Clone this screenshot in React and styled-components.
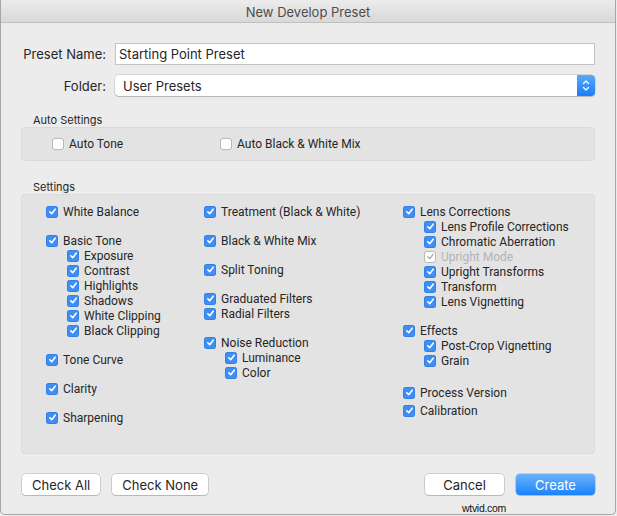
import React from "react";
import styled, { createGlobalStyle } from "styled-components";

const Global = createGlobalStyle`
  html, body { margin: 0; padding: 0; background: #ececec; }
  body { font-family: "Inter", "Roboto", "Liberation Sans", sans-serif; color: #262626; }
  * { box-sizing: border-box; }
`;

const Window = styled.div`
  position: relative;
  width: 616px;
  height: 515px;
  background: #ececec;
  border: 1px solid #a6a6a6;
  border-top: none;
  border-radius: 0 0 5px 5px;
  display: flex;
  flex-direction: column;
  overflow: hidden;
`;

const TitleBar = styled.div`
  height: 23px;
  flex: none;
  background: linear-gradient(#ececec, #d8d8d8);
  border-bottom: 1px solid #bfbfbf;
  display: flex;
  align-items: center;
  justify-content: center;
  font-size: 13px;
  color: #4d4d4d;
  padding-top: 1px;
`;

const Body = styled.div`
  flex: 1;
  display: flex;
  flex-direction: column;
  padding: 20px 20px 0 19px;
`;

const FieldRow = styled.div`
  display: flex;
  align-items: center;
  height: 21px;
  margin-bottom: ${(p) => p.$mb || 0}px;
`;

const FieldLabel = styled.div`
  width: 86px;
  text-align: right;
  font-size: 13px;
  color: #262626;
`;

const TextInput = styled.div`
  margin-left: 9px;
  flex: 1;
  height: 22px;
  background: #fff;
  border: 1px solid #c4c4c4;
  font-size: 13px;
  display: flex;
  align-items: center;
  padding-left: 3px;
  color: #262626;
`;

const Select = styled.div`
  margin-left: 9px;
  flex: 1;
  height: 21px;
  background: #fff;
  border-radius: 4px;
  box-shadow: 0 0 0 0.5px rgba(0,0,0,0.2), 0 1px 1px rgba(0,0,0,0.15);
  font-size: 13px;
  display: flex;
  align-items: center;
  padding-left: 8px;
  color: #262626;
`;

const Stepper = styled.div`
  margin-left: auto;
  width: 18px;
  height: 21px;
  border-radius: 0 4px 4px 0;
  background: linear-gradient(#5aa8fb, #1a7ef9);
  display: flex;
  align-items: center;
  justify-content: center;
`;

const SectionTitle = styled.div`
  font-size: 11px;
  color: #262626;
  margin-left: 13px;
  height: 12px;
  line-height: 12px;
  margin-top: ${(p) => p.$mt || 0}px;
  margin-bottom: 1px;
`;

const Panel = styled.div`
  margin-left: 1px;
  background: #e3e3e3;
  border: 1px solid #dadada;
  border-radius: 4px;
`;

const AutoPanel = styled(Panel)`
  height: 34px;
  display: flex;
  align-items: center;
  padding-left: 30px;
`;

const AutoItem = styled.div`
  width: ${(p) => p.$w || "auto"};
`;

const SettingsPanel = styled(Panel)`
  height: 260px;
  display: grid;
  grid-template-columns: 158px 199px 1fr;
  padding: 9px 0 0 24px;
  align-items: start;
`;

const Column = styled.div`
  display: flex;
  flex-direction: column;
`;

const Group = styled.div`
  display: flex;
  flex-direction: column;
  margin-top: ${(p) => p.$mt ?? 14}px;
`;

const Row = styled.div`
  display: flex;
  align-items: center;
  height: 15px;
  padding-left: ${(p) => (p.$sub ? 21 : 0)}px;
  font-family: "Roboto", "Inter", sans-serif;
  font-size: 12px;
  color: ${(p) => (p.$disabled ? "#b3b3b3" : "#262626")};
  white-space: nowrap;
`;

const Box = styled.span`
  width: 12px;
  height: 12px;
  flex: none;
  margin-right: 5px;
  border-radius: 3px;
  display: inline-flex;
  align-items: center;
  justify-content: center;
  background: ${(p) => (p.$checked && !p.$disabled ? "#3d8ef5" : "#fff")};
  box-shadow: ${(p) =>
    p.$checked && !p.$disabled
      ? "inset 0 0 0 0.5px rgba(0,60,160,0.35)"
      : "inset 0 0 0 1px #b9b9b9"};
`;

const ButtonBar = styled.div`
  margin-top: 20px;
  display: flex;
  align-items: flex-start;
  padding-left: 2px;
  gap: 12px;
`;

const Button = styled.div`
  height: 21px;
  min-width: ${(p) => p.$w}px;
  padding: 0 10px;
  border-radius: 4px;
  display: flex;
  align-items: center;
  justify-content: center;
  font-size: 13px;
  color: ${(p) => (p.$primary ? "#fff" : "#262626")};
  background: ${(p) => (p.$primary ? "linear-gradient(#6cb3fa, #1a82fb)" : "#fff")};
  box-shadow: ${(p) =>
    p.$primary
      ? "0 0 0 0.5px rgba(0,80,200,0.4), 0 1px 1px rgba(0,0,0,0.1)"
      : "0 0 0 0.5px rgba(0,0,0,0.25), 0 1px 1px rgba(0,0,0,0.12)"};
`;

const Spacer = styled.div`
  flex: 1;
`;

const Watermark = styled.div`
  position: absolute;
  right: 109px;
  bottom: 0px;
  font-family: "Liberation Sans", Arial, sans-serif;
  font-size: 10.5px;
  color: #111;
  letter-spacing: -0.3px;
`;

const Check = () => (
  <svg width="9" height="9" viewBox="0 0 9 9">
    <path d="M1.8 4.8 L3.7 6.7 L7.2 2.2" fill="none" stroke="#fff" strokeWidth="1.6" strokeLinecap="round" strokeLinejoin="round" />
  </svg>
);

const GrayCheck = () => (
  <svg width="9" height="9" viewBox="0 0 9 9">
    <path d="M1.8 4.8 L3.7 6.7 L7.2 2.2" fill="none" stroke="#b0b0b0" strokeWidth="1.4" strokeLinecap="round" strokeLinejoin="round" />
  </svg>
);

const Item = ({ label, sub, checked = true, disabled }) => (
  <Row $sub={sub} $disabled={disabled}>
    <Box $checked={checked} $disabled={disabled}>
      {checked && (disabled ? <GrayCheck /> : <Check />)}
    </Box>
    {label}
  </Row>
);

const StepIcon = () => (
  <svg width="8" height="13" viewBox="0 0 8 13">
    <path d="M1.5 4.5 L4 2 L6.5 4.5 M1.5 8.5 L4 11 L6.5 8.5" fill="none" stroke="#fff" strokeWidth="1.3" strokeLinecap="round" strokeLinejoin="round" />
  </svg>
);

export default function App() {
  return (
    <>
      <Global />
      <Window>
        <TitleBar>New Develop Preset</TitleBar>
        <Body>
          <FieldRow $mb={11}>
            <FieldLabel>Preset Name:</FieldLabel>
            <TextInput>Starting Point Preset</TextInput>
          </FieldRow>
          <FieldRow>
            <FieldLabel>Folder:</FieldLabel>
            <Select>
              User Presets
              <Stepper><StepIcon /></Stepper>
            </Select>
          </FieldRow>

          <SectionTitle $mt={18}>Auto Settings</SectionTitle>
          <AutoPanel>
            <AutoItem $w="168px"><Item label="Auto Tone" checked={false} /></AutoItem>
            <AutoItem><Item label="Auto Black &amp; White Mix" checked={false} /></AutoItem>
          </AutoPanel>

          <SectionTitle $mt={20}>Settings</SectionTitle>
          <SettingsPanel>
            <Column>
              <Group $mt={0}>
                <Item label="White Balance" />
              </Group>
              <Group>
                <Item label="Basic Tone" />
                <Item sub label="Exposure" />
                <Item sub label="Contrast" />
                <Item sub label="Highlights" />
                <Item sub label="Shadows" />
                <Item sub label="White Clipping" />
                <Item sub label="Black Clipping" />
              </Group>
              <Group><Item label="Tone Curve" /></Group>
              <Group><Item label="Clarity" /></Group>
              <Group><Item label="Sharpening" /></Group>
            </Column>
            <Column>
              <Group $mt={0}><Item label="Treatment (Black &amp; White)" /></Group>
              <Group><Item label="Black &amp; White Mix" /></Group>
              <Group><Item label="Split Toning" /></Group>
              <Group>
                <Item label="Graduated Filters" />
                <Item label="Radial Filters" />
              </Group>
              <Group>
                <Item label="Noise Reduction" />
                <Item sub label="Luminance" />
                <Item sub label="Color" />
              </Group>
            </Column>
            <Column>
              <Group $mt={0}>
                <Item label="Lens Corrections" />
                <Item sub label="Lens Profile Corrections" />
                <Item sub label="Chromatic Aberration" />
                <Item sub disabled label="Upright Mode" />
                <Item sub label="Upright Transforms" />
                <Item sub label="Transform" />
                <Item sub label="Lens Vignetting" />
              </Group>
              <Group>
                <Item label="Effects" />
                <Item sub label="Post-Crop Vignetting" />
                <Item sub label="Grain" />
              </Group>
              <Group $mt={17}><Item label="Process Version" /></Group>
              <Group $mt={3}><Item label="Calibration" /></Group>
            </Column>
          </SettingsPanel>

          <ButtonBar>
            <Button $w={78}>Check All</Button>
            <Button $w={96}>Check None</Button>
            <Spacer />
            <Button $w={79}>Cancel</Button>
            <Button $w={79} $primary>Create</Button>
          </ButtonBar>
        </Body>
        <Watermark>wtvid.com</Watermark>
      </Window>
    </>
  );
}
